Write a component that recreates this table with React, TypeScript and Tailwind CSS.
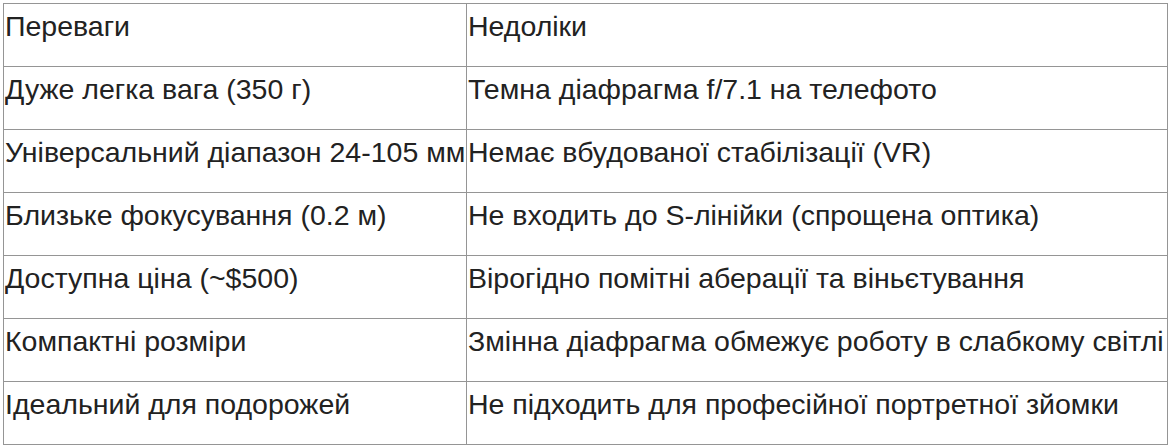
const rows: [string, string][] = [
  ["Переваги", "Недоліки"],
  ["Дуже легка вага (350 г)", "Темна діафрагма f/7.1 на телефото"],
  ["Універсальний діапазон 24-105 мм", "Немає вбудованої стабілізації (VR)"],
  ["Близьке фокусування (0.2 м)", "Не входить до S-лінійки (спрощена оптика)"],
  ["Доступна ціна (~$500)", "Вірогідно помітні аберації та віньєтування"],
  ["Компактні розміри", "Змінна діафрагма обмежує роботу в слабкому світлі"],
  ["Ідеальний для подорожей", "Не підходить для професійної портретної зйомки"],
];

export default function App() {
  return (
    <div className="h-[447px] w-[1176px] bg-white pl-[3px] pt-[3px] font-['Liberation_Sans',Arial,sans-serif] text-[28.5px] leading-[32px] text-[#222]">
      <table className="w-[1165px] table-fixed border-collapse">
        <colgroup>
          <col className="w-[463px]" />
          <col />
        </colgroup>
        <tbody>
          {rows.map(([pro, con]) => (
            <tr key={pro} className="h-[63px]">
              <td className="whitespace-nowrap border border-[#959595] px-[1px] pt-[6px] align-top">
                {pro}
              </td>
              <td className="whitespace-nowrap border border-[#959595] px-[1px] pt-[6px] align-top">
                {con}
              </td>
            </tr>
          ))}
        </tbody>
      </table>
    </div>
  );
}
